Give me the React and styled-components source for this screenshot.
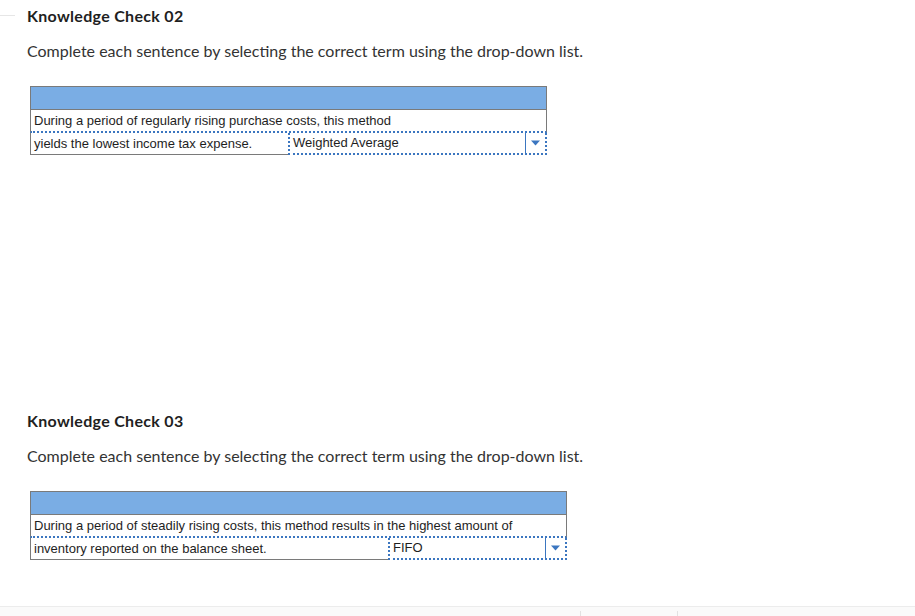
import styled, { createGlobalStyle } from 'styled-components';

const GlobalStyle = createGlobalStyle`
  html, body {
    margin: 0;
    padding: 0;
    background: #ffffff;
  }
  body {
    font-family: Lato, "Open Sans", sans-serif;
    color: #222222;
  }
`;

const Page = styled.div`
  position: relative;
  width: 915px;
  height: 616px;
  overflow: hidden;
  display: flex;
  flex-direction: column;
`;

const TopTick = styled.div`
  position: absolute;
  left: 0;
  top: 15px;
  width: 15px;
  height: 1px;
  background: #e6e6e6;
`;

const Content = styled.div`
  flex: 1;
  padding: 6px 0 0 27px;
`;

const Section = styled.section`
  height: ${(p) => p.$height}px;
`;

const Heading = styled.h2`
  margin: 0;
  font-size: 16px;
  line-height: 20px;
  font-weight: 700;
  letter-spacing: 0.3px;
  color: #1f1f1f;
`;

const Prompt = styled.p`
  margin: 15px 0 0;
  font-size: 16px;
  line-height: 20px;
  color: #333333;
`;

const Table = styled.div`
  margin: 25px 0 0 3px;
  width: ${(p) => p.$width}px;
  font-family: "Liberation Sans", Arial, sans-serif;
  font-size: 13px;
  color: #1e1e1e;
`;

const HeaderBar = styled.div`
  height: 22px;
  background: #7aade4;
  border: 1px solid #7a7a7a;
`;

const SentenceRow = styled.div`
  height: 21px;
  line-height: 21px;
  padding-left: 3px;
  white-space: nowrap;
  border-left: 1px solid #7a7a7a;
  border-right: 1px solid #7a7a7a;
  border-bottom: 2px dotted #3b76c0;
`;

const AnswerRow = styled.div`
  display: flex;
  height: 22px;
`;

const AnswerText = styled.div`
  width: ${(p) => p.$width}px;
  padding-left: 3px;
  line-height: 21px;
  white-space: nowrap;
  border-left: 1px solid #7a7a7a;
  border-bottom: 1px solid #7a7a7a;
  box-sizing: border-box;
`;

const Dropdown = styled.div`
  flex: 1;
  display: flex;
  border-left: 2px dotted #3b76c0;
  border-right: 2px dotted #3b76c0;
  border-bottom: 2px dotted #3b76c0;
`;

const DropdownValue = styled.div`
  flex: 1;
  padding-left: 3px;
  line-height: 20px;
  border-right: 1px solid #3b76c0;
`;

const DropdownArrow = styled.div`
  width: 19px;
  display: flex;
  align-items: center;
  justify-content: center;
`;

const Footer = styled.div`
  position: relative;
  height: 9px;
  border-top: 1px solid #ececec;
  background: #fafafa;
`;

const FooterTick = styled.div`
  position: absolute;
  top: 4px;
  left: ${(p) => p.$left}px;
  width: 1px;
  height: 5px;
  background: #e2e2e2;
`;

const Arrow = () => (
  <svg width="9" height="6" viewBox="0 0 9 6">
    <path d="M0 0.5 H9 L4.5 5.5 Z" fill="#3b76c0" />
  </svg>
);

const checks = [
  {
    title: 'Knowledge Check 02',
    width: 517,
    leftWidth: 258,
    sentence: 'During a period of regularly rising purchase costs, this method',
    rest: 'yields the lowest income tax expense.',
    answer: 'Weighted Average',
    height: 405,
  },
  {
    title: 'Knowledge Check 03',
    width: 537,
    leftWidth: 358,
    sentence: 'During a period of steadily rising costs, this method results in the highest amount of',
    rest: 'inventory reported on the balance sheet.',
    answer: 'FIFO',
    height: 194,
  },
];

const App = () => {
  return (
    <Page>
      <GlobalStyle />
      <TopTick />
      <Content>
        {checks.map((c) => (
          <Section key={c.title} $height={c.height}>
            <Heading>{c.title}</Heading>
            <Prompt>Complete each sentence by selecting the correct term using the drop-down list.</Prompt>
            <Table $width={c.width}>
              <HeaderBar />
              <SentenceRow>{c.sentence}</SentenceRow>
              <AnswerRow>
                <AnswerText $width={c.leftWidth}>{c.rest}</AnswerText>
                <Dropdown>
                  <DropdownValue>{c.answer}</DropdownValue>
                  <DropdownArrow>
                    <Arrow />
                  </DropdownArrow>
                </Dropdown>
              </AnswerRow>
            </Table>
          </Section>
        ))}
      </Content>
      <Footer>
        <FooterTick $left={580} />
        <FooterTick $left={677} />
      </Footer>
    </Page>
  );
};

export default App;
